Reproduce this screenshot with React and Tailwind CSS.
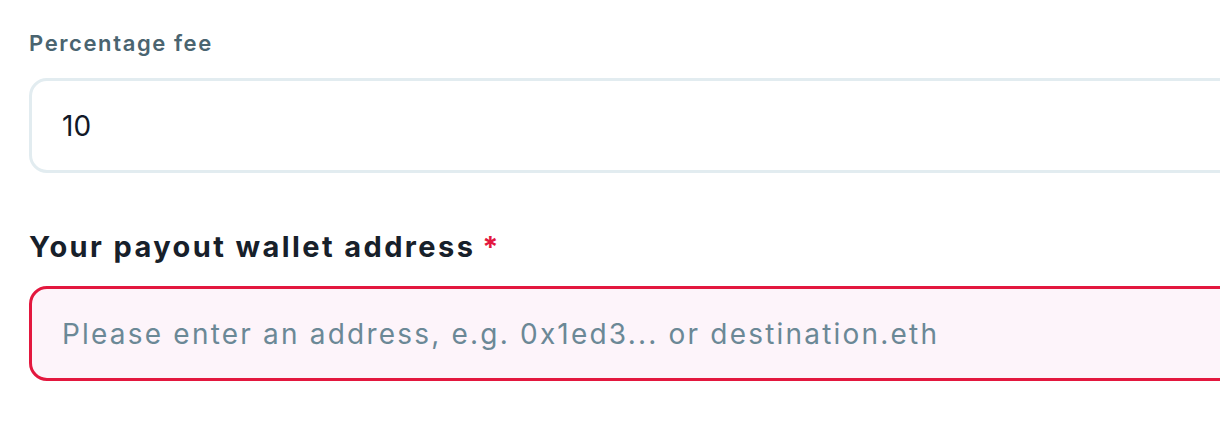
import React from 'react';

const font = { fontFamily: 'Inter, "Noto Sans", sans-serif' };

const Field = ({ label, labelClass, required, children }) => (
  <div className="flex flex-col">
    <label className={labelClass}>
      {label}
      {required && <span className="ml-[7px] tracking-normal text-[#e3173e]">*</span>}
    </label>
    {children}
  </div>
);

export default function App() {
  return (
    <div className="w-[1220px] h-[437px] overflow-hidden bg-white" style={font}>
      <div className="pl-[29px] pt-[28px] w-[1260px]">
        <Field
          label="Percentage fee"
          labelClass="text-[22px] leading-[30px] font-semibold tracking-[1.6px] text-[#4a6470]"
        >
          <input
            type="text"
            defaultValue="10"
            className="mt-[20px] h-[95px] w-full rounded-[18px] border-[3px] border-[#e2ecf0] bg-white px-[30px] text-[28px] text-[#111827] outline-none"
          />
        </Field>
        <div className="h-[54px]" />
        <Field
          label="Your payout wallet address"
          labelClass="text-[29px] leading-[40px] font-bold tracking-[2.4px] text-[#17202a]"
          required
        >
          <input
            type="text"
            placeholder="Please enter an address, e.g. 0x1ed3... or destination.eth"
            className="mt-[19px] h-[95px] w-full rounded-[18px] border-[3px] border-[#e3173e] bg-[#fdf4fa] px-[30px] text-[28px] tracking-[2.2px] text-[#111827] placeholder:text-[#6b8896] outline-none"
          />
        </Field>
      </div>
    </div>
  );
}
